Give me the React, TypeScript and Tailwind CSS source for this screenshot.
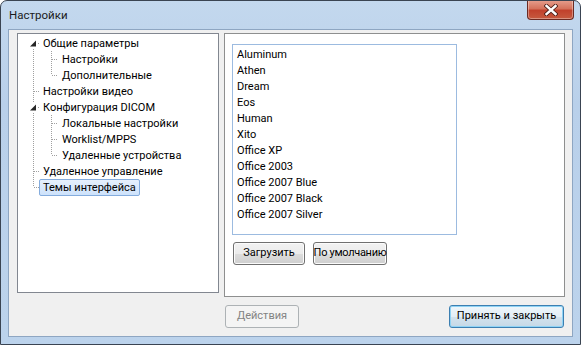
import type { ReactNode } from "react";

type TreeItem = {
  label: string;
  level: 0 | 1;
  expanded?: boolean;
  first?: boolean;
  last?: boolean;
  lastChild?: boolean;
  selected?: boolean;
};

const TREE: TreeItem[] = [
  { label: "Общие параметры", level: 0, expanded: true, first: true },
  { label: "Настройки", level: 1 },
  { label: "Дополнительные", level: 1, lastChild: true },
  { label: "Настройки видео", level: 0 },
  { label: "Конфигурация DICOM", level: 0, expanded: true },
  { label: "Локальные настройки", level: 1 },
  { label: "Worklist/MPPS", level: 1 },
  { label: "Удаленные устройства", level: 1, lastChild: true },
  { label: "Удаленное управление", level: 0 },
  { label: "Темы интерфейса", level: 0, selected: true, last: true },
];

const THEMES = [
  "Aluminum",
  "Athen",
  "Dream",
  "Eos",
  "Human",
  "Xito",
  "Office XP",
  "Office 2003",
  "Office 2007 Blue",
  "Office 2007 Black",
  "Office 2007 Silver",
];

const LINE = "#a0a0a0";

// one 19x16 cell of tree connector lines
function Cell({ lineX, top, bottom, branch, expander }: {
  lineX: number;
  top: boolean;
  bottom: boolean;
  branch: boolean;
  expander?: boolean;
}) {
  const x = lineX + 0.5;
  return (
    <svg width="19" height="16" className="shrink-0">
      {top && <line x1={x} y1={0} x2={x} y2={8} stroke={LINE} strokeDasharray="1 1" />}
      {bottom && <line x1={x} y1={8} x2={x} y2={16} stroke={LINE} strokeDasharray="1 1" />}
      {branch && <line x1={lineX + 1} y1={8.5} x2={19} y2={8.5} stroke={LINE} strokeDasharray="1 1" />}
      {expander && (
        <>
          <rect x={lineX - 5} y={3} width={10} height={10} fill="#fff" />
          <polygon points={`${lineX + 3},5.5 ${lineX + 3},11.5 ${lineX - 3},11.5`} fill="#262626" />
        </>
      )}
    </svg>
  );
}

function TreeRow({ item }: { item: TreeItem }) {
  return (
    <div className="flex h-[16px] items-center">
      {item.level === 0 ? (
        <Cell lineX={13} top={!item.first} bottom={!item.last} branch expander={item.expanded} />
      ) : (
        <>
          <Cell lineX={13} top bottom branch={false} />
          <Cell lineX={12} top bottom={!item.lastChild} branch />
        </>
      )}
      <span
        className={
          item.selected
            ? "h-[17px] rounded-[2px] border border-[#84acdd] bg-gradient-to-b from-[#e6f0fc] to-[#cde2fb] px-[3px] leading-[15px] whitespace-nowrap"
            : "h-[16px] border border-transparent px-[3px] leading-[15px] whitespace-nowrap"
        }
      >
        {item.label}
      </span>
    </div>
  );
}

function Button({ children, width, kind = "normal" }: {
  children: ReactNode;
  width: string;
  kind?: "normal" | "default" | "disabled";
}) {
  const base = `${width} flex h-[23px] shrink-0 items-center justify-center rounded-[3px] border whitespace-nowrap`;
  if (kind === "disabled") {
    return <div className={`${base} border-[#adb2b5] bg-[#f4f4f4] text-[#838383]`}>{children}</div>;
  }
  if (kind === "default") {
    return (
      <div className={`${base} border-[#3c7fb1] bg-[linear-gradient(#eef6fb,#e3eef6_50%,#d3e3ee_50%,#c5d8e6)] shadow-[inset_0_0_0_1px_#8fd3f5] text-black`}>
        {children}
      </div>
    );
  }
  return (
    <div className={`${base} border-[#707070] bg-[linear-gradient(#f2f2f2,#ebebeb_50%,#dddddd_50%,#cfcfcf)] shadow-[inset_0_0_0_1px_#fbfbfb] text-black`}>
      {children}
    </div>
  );
}

function CloseButton() {
  return (
    <div className="flex h-[20px] w-[47px] items-center justify-center rounded-b-[4px] border border-t-0 border-[#6b2a22] bg-[linear-gradient(#e7a08f,#d5725c_45%,#c1412c_55%,#c65a3f)] shadow-[inset_0_0_0_1px_rgba(255,255,255,0.35)]">
      <svg width="14" height="12" viewBox="0 0 14 12">
        <path d="M2.5 2 L11.5 10 M11.5 2 L2.5 10" stroke="#4a1d17" strokeWidth="4.2" strokeLinecap="square" />
        <path d="M2.5 2 L11.5 10 M11.5 2 L2.5 10" stroke="#fff" strokeWidth="2.4" strokeLinecap="square" />
      </svg>
    </div>
  );
}

export default function App() {
  return (
    <div
      className="relative flex h-[345px] w-[581px] flex-col overflow-hidden rounded-t-[7px] border border-[#3a4452] bg-[linear-gradient(180deg,#c3d8ee_0%,#b9d0ea_30%,#bcd3ec_100%)] text-[11px] text-black"
      style={{ fontFamily: 'Roboto, "Noto Sans", sans-serif' }}
    >
      {/* title bar */}
      <div className="flex h-[28px] shrink-0 items-start justify-between">
        <div className="pl-[8px] pt-[6px] text-[11.5px] leading-[16px] text-[#1b1b1b]">Настройки</div>
        <div className="mr-[6px] -mt-px">
          <CloseButton />
        </div>
      </div>

      {/* client area */}
      <div className="mx-[7px] mb-[7px] flex flex-1 flex-col border border-[#8ea6c2] bg-[#f0f0f0] pl-[8px] pr-[8px] pt-[3px]">
        <div className="flex items-start gap-[5px]">
          <div className="h-[260px] w-[202px] shrink-0 border border-[#828790] bg-white pl-[2px] pt-px">
            {TREE.map((item) => (
              <TreeRow key={item.label} item={item} />
            ))}
          </div>

          <div className="h-[264px] w-[341px] shrink-0 border border-[#8e8f8f] bg-white pl-[7px] pt-[10px]">
            <div className="h-[191px] w-[225px] border border-[#9cbbe0] bg-white pl-[4px] pt-px">
              {THEMES.map((t) => (
                <div key={t} className="h-[16px] leading-[17px] whitespace-nowrap">
                  {t}
                </div>
              ))}
            </div>
            <div className="ml-[1px] mt-[7px] flex gap-[8px]">
              <Button width="w-[72px]">Загрузить</Button>
              <Button width="w-[74px]">
                <span className="tracking-[-0.3px]">По умолчанию</span>
              </Button>
            </div>
          </div>
        </div>

        <div className="mt-[8px] flex items-center">
          <div className="w-[208px] shrink-0" />
          <Button width="w-[74px]" kind="disabled">Действия</Button>
          <div className="flex-1" />
          <Button width="w-[115px]" kind="default">Принять и закрыть</Button>
        </div>
      </div>
    </div>
  );
}
